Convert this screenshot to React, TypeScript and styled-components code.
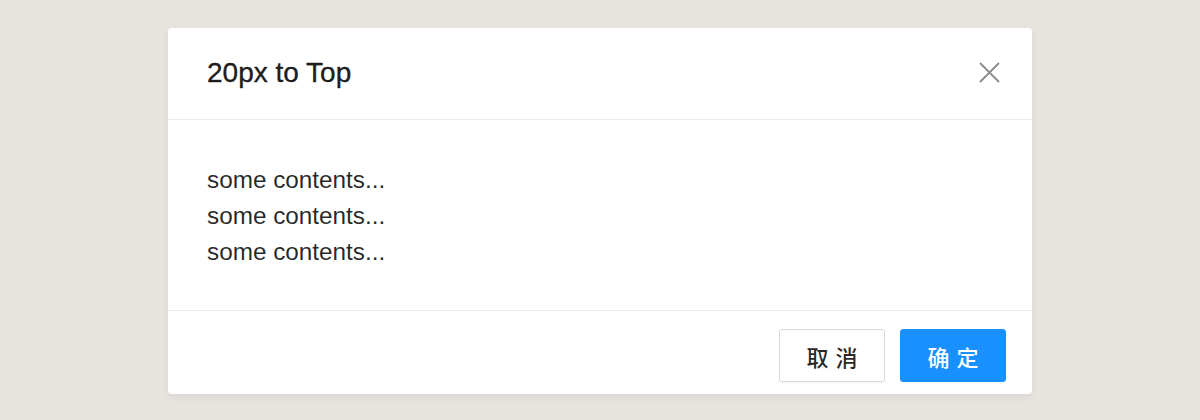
import React from "react";
import styled, { createGlobalStyle } from "styled-components";

const Global = createGlobalStyle`
  html, body { margin: 0; padding: 0; }
  body {
    background: #e7e4df;
    font-family: "Liberation Sans", Arial, "Noto Sans CJK SC", sans-serif;
    color: rgba(0,0,0,0.85);
  }
`;

const Page = styled.div`
  width: 1200px;
  height: 420px;
  display: flex;
  justify-content: center;
  align-items: flex-start;
  padding-top: 28px;
  box-sizing: border-box;
`;

const Modal = styled.div`
  width: 864px;
  background: #fff;
  border-radius: 4px;
  box-shadow: 0 3px 9px rgba(0,0,0,0.06);
  display: flex;
  flex-direction: column;
`;

const Header = styled.div`
  height: 91px;
  border-bottom: 1px solid #ececec;
  display: flex;
  align-items: center;
  justify-content: space-between;
  padding: 0 31px 0 39px;
`;

const Title = styled.div`
  font-size: 28px;
  line-height: 36px;
  color: rgba(0,0,0,0.88);
  -webkit-text-stroke: 0.4px rgba(0,0,0,0.85);
  margin-top: -2px;
`;

const Close = styled.button`
  border: 0;
  background: none;
  padding: 0;
  width: 24px;
  height: 24px;
  display: flex;
  align-items: center;
  justify-content: center;
  color: #8a8a8a;
  cursor: pointer;
  margin-top: -2px;
`;

const Body = styled.div`
  height: 190px;
  box-sizing: border-box;
  padding: 42px 39px 0;
  font-size: 24.3px;
  line-height: 36px;
  color: rgba(0,0,0,0.85);
`;

const Footer = styled.div`
  border-top: 1px solid #ececec;
  display: flex;
  justify-content: flex-end;
  gap: 15px;
  padding: 18px 26px 12px;
`;

const Button = styled.button<{ $primary?: boolean }>`
  height: 53px;
  width: 106px;
  padding: 0;
  border-radius: 3px;
  font-family: "Noto Sans CJK SC", sans-serif;
  font-size: 22px;
  font-weight: 500;
  white-space: nowrap;
  letter-spacing: 7px;
  text-indent: 7px;
  border: 1px solid ${p => (p.$primary ? "#1890ff" : "#d9d9d9")};
  background: ${p => (p.$primary ? "#1890ff" : "#fff")};
  color: ${p => (p.$primary ? "#fff" : "rgba(0,0,0,0.85)")};
  box-shadow: 0 2px 0 rgba(0,0,0,0.02);
  cursor: pointer;
  display: flex;
  align-items: center;
  justify-content: center;
`;

export default function App() {
  return (
    <>
      <Global />
      <Page>
        <Modal>
          <Header>
            <Title>20px to Top</Title>
            <Close aria-label="close">
              <svg width="21" height="21" viewBox="0 0 21 21">
                <path d="M1 1 L20 20 M20 1 L1 20" stroke="currentColor" strokeWidth="1.8" fill="none" />
              </svg>
            </Close>
          </Header>
          <Body>
            <div>some contents...</div>
            <div>some contents...</div>
            <div>some contents...</div>
          </Body>
          <Footer>
            <Button>取消</Button>
            <Button $primary>确定</Button>
          </Footer>
        </Modal>
      </Page>
    </>
  );
}
